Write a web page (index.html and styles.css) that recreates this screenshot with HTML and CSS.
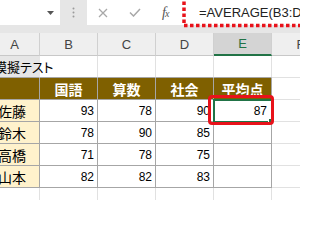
FILE: index.html
```html
<!DOCTYPE html>
<html lang="ja">
<head>
<meta charset="utf-8">
<link rel="stylesheet" href="styles.css">
</head>
<body>
<div class="app">
  <div class="fbar">
    <div class="namebox">
      <svg class="caret" width="7" height="4" viewBox="0 0 7 4"><path d="M0 0H7L3.5 4Z" fill="#555"/></svg>
    </div>
    <div class="grip">
      <svg width="3" height="11" viewBox="0 0 3 11"><circle cx="1.5" cy="1.5" r="1" fill="#9a9a9a"/><circle cx="1.5" cy="5.5" r="1" fill="#9a9a9a"/><circle cx="1.5" cy="9.5" r="1" fill="#9a9a9a"/></svg>
    </div>
    <div class="fx-area">
      <svg class="ico-x" width="10" height="10" viewBox="0 0 10 10"><path d="M1 1L9 9M9 1L1 9" stroke="#a8a8a8" stroke-width="1.3" fill="none"/></svg>
      <svg class="ico-ok" width="12" height="9" viewBox="0 0 12 9"><path d="M1 4.5L4.5 8L11 1" stroke="#a8a8a8" stroke-width="1.5" fill="none"/></svg>
      <span class="fx">f<span class="fx-x">x</span></span>
      <span class="formula">=AVERAGE(B3:D3)</span>
    </div>
  </div>
  <div class="band"></div>
  <div class="sheet">
    <div class="c h">A</div>
    <div class="c h">B</div>
    <div class="c h">C</div>
    <div class="c h">D</div>
    <div class="c h sel">E</div>
    <div class="c h">F</div>

    <div class="c title tb">模擬テスト</div>
    <div class="c tb"></div>
    <div class="c tb"></div>
    <div class="c tb"></div>
    <div class="c tb"></div>
    <div class="c"></div>

    <div class="c th"></div>
    <div class="c th">国語</div>
    <div class="c th">算数</div>
    <div class="c th">社会</div>
    <div class="c th">平均点</div>
    <div class="c"></div>

    <div class="c name">佐藤</div>
    <div class="c num">93</div>
    <div class="c num">78</div>
    <div class="c num">90</div>
    <div class="c num cur">87</div>
    <div class="c"></div>

    <div class="c name">鈴木</div>
    <div class="c num">78</div>
    <div class="c num">90</div>
    <div class="c num">85</div>
    <div class="c num"></div>
    <div class="c"></div>

    <div class="c name">高橋</div>
    <div class="c num">71</div>
    <div class="c num">78</div>
    <div class="c num">75</div>
    <div class="c num"></div>
    <div class="c"></div>

    <div class="c name">山本</div>
    <div class="c num">82</div>
    <div class="c num">82</div>
    <div class="c num">83</div>
    <div class="c num"></div>
    <div class="c"></div>

    <div class="c"></div>
    <div class="c"></div>
    <div class="c"></div>
    <div class="c"></div>
    <div class="c"></div>
    <div class="c"></div>
  </div>
  <svg class="mark-formula" width="140" height="48" viewBox="0 0 140 48"><rect x="2" y="2" width="160" height="43.5" fill="none" stroke="#e8121a" stroke-width="3.5" stroke-dasharray="3.5 2.5"/></svg>
  <div class="mark-cell"></div>
</div>
</body>
</html>
```
FILE: styles.css
```css
html, body {
  margin: 0;
  padding: 0;
  background: #ffffff;
}

.app {
  position: relative;
  width: 300px;
  height: 200px;
  overflow: hidden;
  background: #e6e6e6;
  font-family: "Liberation Sans", "Noto Sans CJK JP", sans-serif;
}

.fbar {
  display: flex;
  height: 25px;
}

.namebox {
  flex: 0 0 60px;
  background: #ffffff;
  display: flex;
  align-items: center;
  justify-content: flex-end;
  box-sizing: border-box;
  padding-right: 6px;
}

.grip {
  flex: 0 0 27px;
  display: flex;
  align-items: center;
  justify-content: center;
}

.fx-area {
  flex: 1 1 0;
  min-width: 0;
  overflow: hidden;
  background: #ffffff;
  display: flex;
  align-items: center;
  padding-left: 11px;
}

.ico-x,
.ico-ok {
  flex: 0 0 auto;
}

.ico-ok {
  margin-left: 21px;
}

.fx {
  flex: 0 0 11px;
  width: 11px;
  margin-left: 21px;
  font-family: "Liberation Serif", serif;
  font-style: italic;
  font-size: 14px;
  color: #555555;
  letter-spacing: -1px;
}

.fx-x {
  font-size: 10px;
}

.formula {
  flex: 0 0 auto;
  margin-left: 26px;
  font-size: 13px;
  color: #222222;
  white-space: nowrap;
}

.band {
  height: 8px;
}

.sheet {
  display: grid;
  grid-template-columns: 50px repeat(5, 58px);
  grid-template-rows: 23px repeat(7, 22px);
  margin-left: -10px;
}

.c {
  box-sizing: border-box;
  background: #ffffff;
  border-right: 1px solid #e1e1e1;
  border-bottom: 1px solid #e1e1e1;
  display: flex;
  align-items: center;
  white-space: nowrap;
  font-size: 12px;
  color: #000000;
}

.h {
  background: #efefef;
  border-right-color: #d0d0d0;
  border-bottom-color: #c8c8c8;
  justify-content: center;
  font-size: 13px;
  color: #444444;
}

.h.sel {
  background: #d4d4d4;
  color: #217346;
  border-bottom: 2px solid #217346;
}

.tb {
  border-bottom-color: #a6a6a6;
}

.title {
  border-right-color: transparent;
  padding-left: 4px;
  font-size: 13px;
  font-feature-settings: "palt";
  overflow: visible;
  position: relative;
  z-index: 1;
  background: transparent;
}

.th {
  background: #7f6000;
  color: #ffffff;
  font-weight: bold;
  font-size: 14px;
  justify-content: center;
  border-right-color: #a6a6a6;
  border-bottom-color: #a6a6a6;
}

.name {
  background: #fff2cc;
  font-size: 14px;
  padding-left: 8px;
  border-right-color: #a6a6a6;
  border-bottom-color: #a6a6a6;
}

.num {
  justify-content: flex-end;
  padding-right: 3px;
  font-size: 12px;
  border-right-color: #a6a6a6;
  border-bottom-color: #a6a6a6;
}

.cur {
  position: relative;
  outline: 2px solid #217346;
  outline-offset: -1px;
  padding-right: 4px;
}

.cur::after {
  content: "";
  position: absolute;
  right: -3px;
  bottom: -3px;
  width: 4px;
  height: 4px;
  background: #217346;
  border: 1px solid #ffffff;
}

.mark-formula {
  position: absolute;
  left: 182px;
  top: -20px;
}

.mark-cell {
  position: absolute;
  left: 208px;
  top: 95px;
  width: 66px;
  height: 30px;
  box-sizing: border-box;
  border: 3px solid #e8121a;
  border-radius: 4px;
}
```
